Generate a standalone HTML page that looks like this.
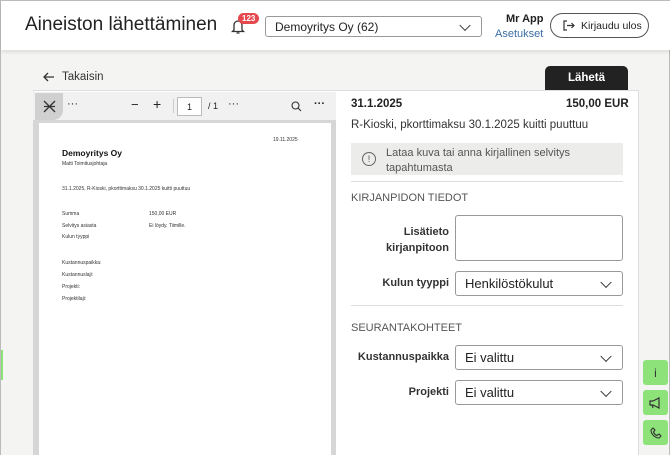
<!DOCTYPE html><html><head><meta charset="utf-8"><style>
*{box-sizing:border-box;margin:0;padding:0}
html{width:670px;height:455px;overflow:hidden}
body{width:670px;height:455px;overflow:hidden;background:#f4f4f2;font-family:"Liberation Sans",sans-serif;position:relative;color:#222;border-left:1px solid #bbb;border-right:1px solid #bbb}
.hdr{position:absolute;left:0;top:0;width:670px;height:50px;background:#fff;box-shadow:0 2px 4px rgba(0,0,0,.1);border-top:1px solid #bbb}
.abs{position:absolute}
.sel{position:absolute;background:#fff;border:1px solid #999;border-radius:3px;font-size:13px;padding-left:9px;display:flex;align-items:center}
.chev{position:absolute;right:12px;top:50%;width:8px;height:8px;border-right:1.5px solid #333;border-bottom:1.5px solid #333;transform:translateY(-70%) rotate(45deg)}
.lbl{position:absolute;font-size:11px;font-weight:bold;color:#333;text-align:right}
.pt{position:absolute;font-size:5px;color:#333}
.gb{position:absolute;left:642px;width:25px;height:25px;background:#8ee27a;border-radius:3px;font-size:12px;display:flex;align-items:center;justify-content:center;color:#333}
</style></head><body>
<div class="hdr">
<div class="abs" style="left:24px;top:13px;font-size:19px;color:#222">Aineiston lähettäminen</div>
<svg class="abs" style="left:229px;top:17px" width="16" height="17" viewBox="0 0 16 17"><path d="M4 12V7a4 4 0 0 1 8 0v5l1.5 1.5h-11z M6.5 15h3" fill="none" stroke="#333" stroke-width="1.3"/></svg>
<div class="abs" style="left:237px;top:12px;background:#e5484d;color:#fff;font-size:8px;font-weight:bold;border-radius:7px;padding:1px 4px">123</div>
<div class="sel" style="left:264px;top:15px;width:217px;height:21px;font-size:12px">Demoyritys Oy (62)<span class="chev" style="right:12px"></span></div>
<div class="abs" style="left:505px;top:12px;font-size:11px;font-weight:bold">Mr App</div>
<div class="abs" style="left:494px;top:27px;font-size:11px;color:#3a6ea5">Asetukset</div>
<div class="abs" style="left:549px;top:12px;width:99px;height:25px;border:1px solid #555;border-radius:13px;font-size:10.5px;padding:6px 0 0 30px">Kirjaudu ulos</div>
<svg class="abs" style="left:562px;top:19px" width="12" height="11" viewBox="0 0 12 11"><path d="M4 1H1v9h3M4 5.5h7M8.5 3l2.5 2.5L8.5 8" fill="none" stroke="#333" stroke-width="1.2"/></svg>
</div>
<svg class="abs" style="left:42px;top:72px" width="12" height="10" viewBox="0 0 12 10"><path d="M11 5H1M5 1L1 5l4 4" fill="none" stroke="#333" stroke-width="1.3"/></svg>
<div class="abs" style="left:61px;top:71px;font-size:11.5px;color:#333">Takaisin</div>
<div class="abs" style="left:544px;top:66px;width:83px;height:25px;background:#222;color:#fff;font-weight:bold;font-size:11.5px;text-align:center;padding-top:6px;border-radius:5px 5px 0 0">Lähetä</div>
<div class="abs" style="left:32px;top:90px;width:606px;height:365px;background:#fff;border:1px solid #ddd;border-bottom:none"></div>
<div class="abs" style="left:32px;top:92px;width:303px;height:363px;background:#d6d6d6"></div>
<div class="abs" style="left:32px;top:92px;width:303px;height:28px;background:#f1f1f1"></div>
<div class="abs" style="left:34px;top:93px;width:28px;height:27px;background:#d0d0d0;border-radius:0 0 10px 0"></div>
<svg class="abs" style="left:42px;top:100px" width="13" height="13" viewBox="0 0 13 13"><path d="M1 1l11 11M12 1L1 12M1 6.5h11" stroke="#333" stroke-width="1.3"/></svg>
<div class="abs" style="left:66px;top:98px;font-size:11px">···</div>
<div class="abs" style="left:130px;top:97px;font-size:13px">−</div>
<div class="abs" style="left:152px;top:96px;font-size:14px">+</div>
<div class="abs" style="left:172px;top:99px;width:1px;height:14px;background:#ccc"></div>
<div class="abs" style="left:176px;top:97px;width:25px;height:19px;background:#fff;border:1px solid #bbb;font-size:9px;text-align:center;padding-top:4px">1</div>
<div class="abs" style="left:207px;top:101px;font-size:9px">/ 1</div>
<div class="abs" style="left:227px;top:98px;font-size:11px">···</div>
<svg class="abs" style="left:290px;top:101px" width="11" height="11" viewBox="0 0 11 11"><circle cx="4.5" cy="4.5" r="3.5" fill="none" stroke="#333" stroke-width="1.1"/><path d="M7 7l3 3" stroke="#333" stroke-width="1.1"/></svg>
<div class="abs" style="left:313px;top:98px;font-size:11px;font-weight:bold">···</div>
<div class="abs" style="left:38px;top:123px;width:292px;height:340px;background:#fff"></div>
<div class="pt" style="left:272px;top:137px">19.11.2025</div>
<div class="pt" style="left:61px;top:148px;font-size:8.5px;font-weight:bold;color:#111">Demoyritys Oy</div>
<div class="pt" style="left:61px;top:161px">Matti Toimitusjohtaja</div>
<div class="pt" style="left:61px;top:186px">31.1.2025, R-Kioski, pkorttimaksu 30.1.2025 kuitti puuttuu</div>
<div class="pt" style="left:61px;top:211px">Summa</div><div class="pt" style="left:148px;top:211px">150,00 EUR</div>
<div class="pt" style="left:61px;top:223px">Selvitys asiasta</div><div class="pt" style="left:148px;top:223px">Ei löydy. Tiimille.</div>
<div class="pt" style="left:61px;top:234px">Kulun tyyppi</div>
<div class="pt" style="left:61px;top:260px">Kustannuspaikka:</div>
<div class="pt" style="left:61px;top:272px">Kustannuslaji:</div>
<div class="pt" style="left:61px;top:284px">Projekti:</div>
<div class="pt" style="left:61px;top:296px">Projektilaji:</div>
<div class="abs" style="left:350px;top:98px;font-size:11.5px;font-weight:bold">31.1.2025</div>
<div class="abs" style="left:565px;top:98px;font-size:11.5px;font-weight:bold">150,00 EUR</div>
<div class="abs" style="left:350px;top:119px;font-size:11.5px;color:#333">R-Kioski, pkorttimaksu 30.1.2025 kuitti puuttuu</div>
<div class="abs" style="left:350px;top:143px;width:272px;height:32px;background:#ececea"></div>
<div class="abs" style="left:361px;top:152px;width:14px;height:14px;border:1.3px solid #666;border-radius:50%;font-size:9px;text-align:center;line-height:12px;color:#555">!</div>
<div class="abs" style="left:385px;top:146px;font-size:11px;color:#555;line-height:15px">Lataa kuva tai anna kirjallinen selvitys<br>tapahtumasta</div>
<div class="abs" style="left:350px;top:181px;width:272px;height:1px;background:#ddd"></div>
<div class="abs" style="left:350px;top:192px;font-size:11px;color:#555">KIRJANPIDON TIEDOT</div>
<div class="lbl" style="left:350px;top:224px;width:98px;line-height:16px">Lisätieto<br>kirjanpitoon</div>
<div class="abs" style="left:454px;top:215px;width:168px;height:46px;background:#fff;border:1px solid #999;border-radius:3px"></div>
<div class="lbl" style="left:350px;top:277px;width:98px">Kulun tyyppi</div>
<div class="sel" style="left:454px;top:271px;width:168px;height:25px">Henkilöstökulut<span class="chev"></span></div>
<div class="abs" style="left:350px;top:305px;width:272px;height:1px;background:#ddd"></div>
<div class="abs" style="left:350px;top:322px;font-size:11px;color:#555">SEURANTAKOHTEET</div>
<div class="lbl" style="left:350px;top:351px;width:98px">Kustannuspaikka</div>
<div class="sel" style="left:454px;top:345px;width:168px;height:25px">Ei valittu<span class="chev"></span></div>
<div class="lbl" style="left:350px;top:386px;width:98px">Projekti</div>
<div class="sel" style="left:454px;top:380px;width:168px;height:25px">Ei valittu<span class="chev"></span></div>
<div class="gb" style="top:360px">i</div>
<div class="gb" style="top:390px"><svg width="13" height="12" viewBox="0 0 13 12"><path d="M1 4h3l6-3v10L4 8H1zM3 8l1 3" fill="none" stroke="#333" stroke-width="1.2"/></svg></div>
<div class="gb" style="top:420px"><svg width="12" height="12" viewBox="0 0 12 12"><path d="M3 1l2 2-1.5 2a6 6 0 0 0 3.5 3.5L9 7l2 2-2 2C5 11 1 7 1 3z" fill="none" stroke="#333" stroke-width="1.1"/></svg></div>
<div class="abs" style="left:0;top:350px;width:2px;height:30px;background:#8ee27a"></div>
</body></html>
